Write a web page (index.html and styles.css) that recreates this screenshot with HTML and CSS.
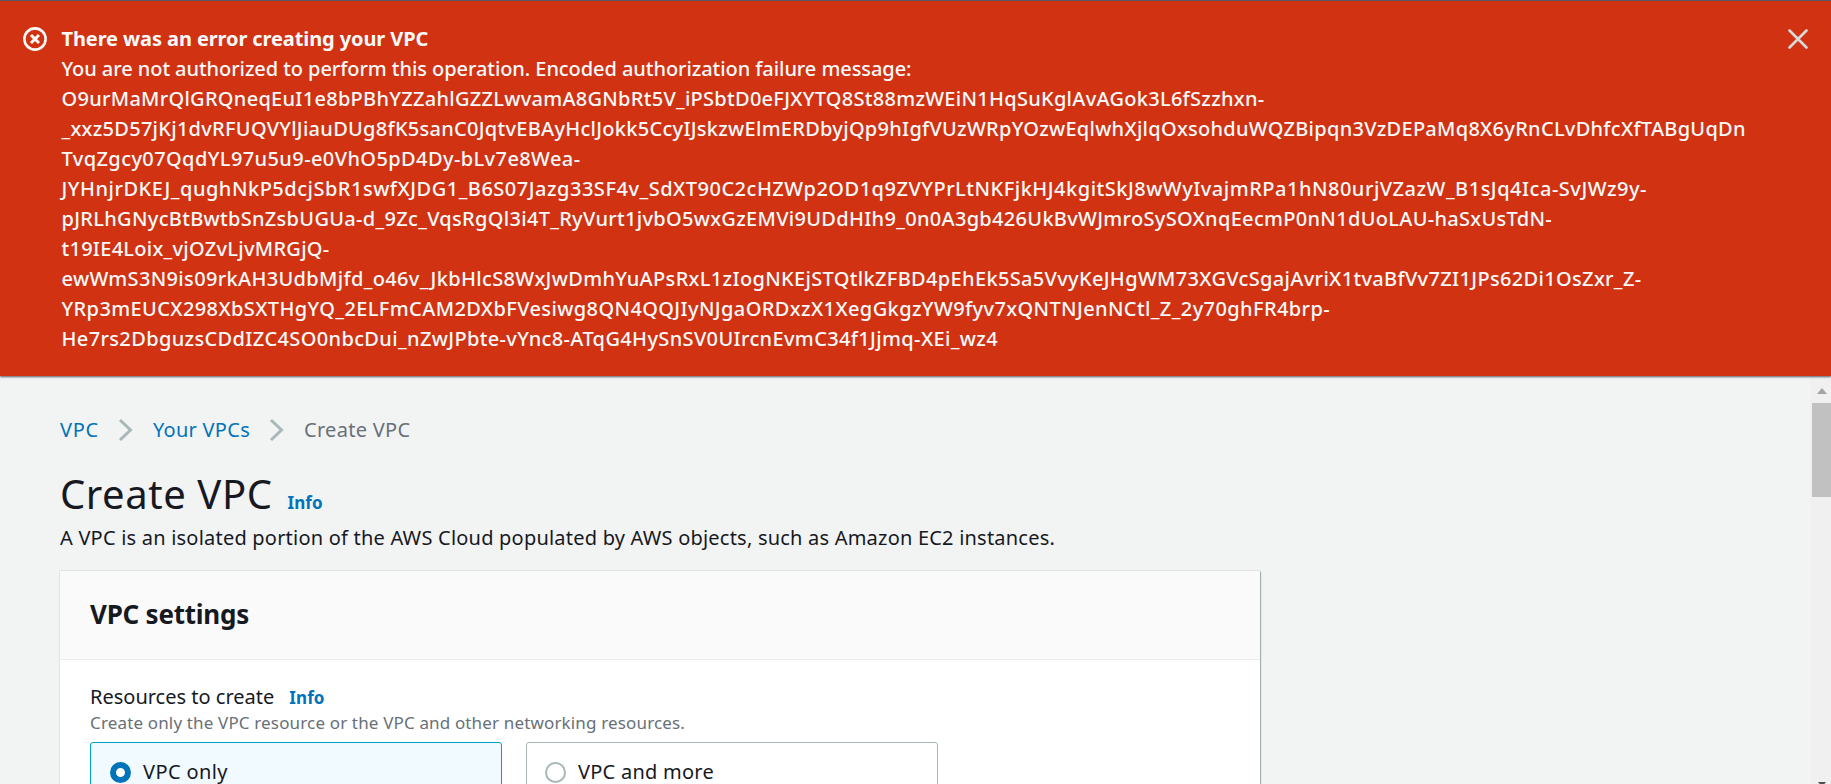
FILE: index.html
```html
<!DOCTYPE html>
<html lang="en">
<head>
<meta charset="utf-8">
<title>Create VPC</title>
<link rel="stylesheet" href="styles.css">
</head>
<body>
<div class="app">
  <section class="flash" role="alert">
    <svg class="flash-icon" viewBox="0 0 24 24" fill="none" stroke="currentColor" stroke-width="2.6"><circle cx="12" cy="12" r="10.6"/><path d="M8 8l8 8M16 8l-8 8" stroke-width="3"/></svg>
    <div class="flash-text">
      <div class="flash-title">There was an error creating your VPC</div>
      <div class="m1">You are not authorized to perform this operation. Encoded authorization failure message:</div>
      <div class="m2">O9urMaMrQlGRQneqEuI1e8bPBhYZZahlGZZLwvamA8GNbRt5V_iPSbtD0eFJXYTQ8St88mzWEiN1HqSuKglAvAGok3L6fSzzhxn-</div>
      <div class="m3">_xxz5D57jKj1dvRFUQVYlJiauDUg8fK5sanC0JqtvEBAyHclJokk5CcyIJskzwElmERDbyjQp9hIgfVUzWRpYOzwEqlwhXjlqOxsohduWQZBipqn3VzDEPaMq8X6yRnCLvDhfcXfTABgUqDn</div>
      <div class="m4">TvqZgcy07QqdYL97u5u9-e0VhO5pD4Dy-bLv7e8Wea-</div>
      <div class="m5">JYHnjrDKEJ_qughNkP5dcjSbR1swfXJDG1_B6S07Jazg33SF4v_SdXT90C2cHZWp2OD1q9ZVYPrLtNKFjkHJ4kgitSkJ8wWyIvajmRPa1hN80urjVZazW_B1sJq4Ica-SvJWz9y-</div>
      <div class="m6">pJRLhGNycBtBwtbSnZsbUGUa-d_9Zc_VqsRgQl3i4T_RyVurt1jvbO5wxGzEMVi9UDdHIh9_0n0A3gb426UkBvWJmroSySOXnqEecmP0nN1dUoLAU-haSxUsTdN-</div>
      <div class="m7">t19IE4Loix_vjOZvLjvMRGjQ-</div>
      <div class="m8">ewWmS3N9is09rkAH3UdbMjfd_o46v_JkbHlcS8WxJwDmhYuAPsRxL1zIogNKEjSTQtlkZFBD4pEhEk5Sa5VvyKeJHgWM73XGVcSgajAvriX1tvaBfVv7ZI1JPs62Di1OsZxr_Z-</div>
      <div class="m9">YRp3mEUCX298XbSXTHgYQ_2ELFmCAM2DXbFVesiwg8QN4QQJIyNJgaORDxzX1XegGkgzYW9fyv7xQNTNJenNCtl_Z_2y70ghFR4brp-</div>
      <div class="m10">He7rs2DbguzsCDdIZC4SO0nbcDui_nZwJPbte-vYnc8-ATqG4HySnSV0UIrcnEvmC34f1Jjmq-XEi_wz4</div>
    </div>
    <svg class="flash-close" viewBox="0 0 20 20" fill="none" stroke="currentColor" stroke-width="2.6" stroke-linecap="round"><path d="M1.5 1.5l17 17M18.5 1.5l-17 17"/></svg>
  </section>
  <div class="body">
    <main class="content">
      <nav class="crumbs">
        <a class="c1">VPC</a>
        <svg class="chev" viewBox="0 0 14 22"><path d="M1 1l10.500 10-10.500 10"/></svg>
        <a class="c2">Your VPCs</a>
        <svg class="chev" viewBox="0 0 14 22"><path d="M1 1l10.500 10-10.500 10"/></svg>
        <span class="c3">Create VPC</span>
      </nav>
      <header class="page-head"><h1>Create VPC</h1><a class="info">Info</a></header>
      <p class="desc">A VPC is an isolated portion of the AWS Cloud populated by AWS objects, such as Amazon EC2 instances.</p>
      <section class="card">
        <div class="card-head"><h2>VPC settings</h2></div>
        <div class="card-body">
          <div class="field"><span class="label">Resources to create</span><a class="info">Info</a></div>
          <div class="hint">Create only the VPC resource or the VPC and other networking resources.</div>
          <div class="tiles">
            <div class="tile selected"><span class="radio"></span><span class="t1">VPC only</span></div>
            <div class="tile"><span class="radio"></span><span class="t2">VPC and more</span></div>
          </div>
        </div>
      </section>
    </main>
    <div class="scrollbar">
      <svg class="up" viewBox="0 0 10 6"><path d="M0 6L5 0l5 6z"/></svg>
      <div class="thumb"></div>
      <svg class="down" viewBox="0 0 8 5"><path d="M0 0h8L4 5z"/></svg>
    </div>
  </div>
</div>
</body>
</html>
```
FILE: styles.css
```css
* { box-sizing: border-box; }
body { margin: 0; overflow: hidden; font: 400 20px/30px "Noto Sans", sans-serif; color: #16191f; background: #f2f3f3; }
svg { display: block; flex: none; }
h1, h2, p { margin: 0; }

.app { height: 784px; display: flex; flex-direction: column; border-top: 1px solid #545b64; overflow: hidden; }

.flash { flex: none; position: relative; z-index: 1; display: flex; align-items: flex-start; height: 375px; padding: 23px 19px 0 23px; background: #d13212; color: #fafafa; box-shadow: 0 1px 2px #545b64; }
.flash-icon { width: 24px; height: 24px; margin-top: 3px; }
.flash-text { flex: 1; margin-left: 14.500px; white-space: nowrap; font-weight: 500; }
.flash-close { width: 20px; height: 20px; margin: 5px 4px 0 0; color: #d5dbdb; }
.flash-title { font-weight: 700; letter-spacing: -.1px; }
.m1 { letter-spacing: -.069px; }
.m2 { letter-spacing: .28px; }
.m3 { letter-spacing: .278px; }
.m4 { letter-spacing: .402px; }
.m5 { letter-spacing: .508px; }
.m6 { letter-spacing: .308px; }
.m7 { letter-spacing: .274px; }
.m8 { letter-spacing: .334px; }
.m9 { letter-spacing: .389px; }
.m10 { letter-spacing: .36px; }

.body { flex: 1; min-height: 0; display: flex; overflow: hidden; }
.content { flex: 1; padding: 39px 0 0 60px; white-space: nowrap; }

.crumbs { display: flex; align-items: center; height: 30px; color: #687078; }
.crumbs a, .info { color: #0073bb; }
.chev { width: 14px; height: 22px; margin: 0 20px; fill: none; stroke: #aab7b8; stroke-width: 3; overflow: visible; }
.c1 { letter-spacing: .750px; }
.c2 { letter-spacing: .271px; }
.c3 { letter-spacing: .3px; }

.page-head { display: flex; align-items: baseline; height: 50px; margin-top: 24px; }
h1 { font-size: 40px; line-height: 50px; font-weight: 400; letter-spacing: .560px; }
.info { font-size: 17px; font-weight: 700; line-height: 24px; letter-spacing: .1px; margin-left: 15px; }
.desc { margin-top: 4px; letter-spacing: .212px; }

.card { width: 1200px; height: 300px; margin-top: 18px; background: #fff; box-shadow: 0 0 1px #879596, 1px 1px 1px #aab7b8; }
.card-head { height: 89px; padding: 25px 30px 0; background: #fafafa; border-bottom: 1px solid #eaeded; }
h2 { font-size: 26px; line-height: 36px; font-weight: 700; letter-spacing: -.234px; }
.card-body { padding: 22px 30px 0; }
.field { display: flex; align-items: baseline; height: 30px; }
.label { letter-spacing: 0; }
.hint { font-size: 17px; line-height: 22px; letter-spacing: .151px; color: #687078; }
.tiles { display: flex; gap: 24px; margin-top: 8px; }
.tile { display: flex; align-items: flex-start; width: 412px; height: 120px; padding: 14px 18px; border: 1px solid #aab7b8; border-radius: 3px; }
.selected { border-color: #00a1c9; background: #f1faff; }
.radio { width: 21px; height: 21px; margin: 5px 12px 0 0; border: 2px solid #aab7b8; border-radius: 50%; background: #fff; }
.selected .radio { margin-left: 1px; border: 6.500px solid #0073bb; }
.t1 { letter-spacing: .400px; }
.t2 { letter-spacing: .250px; }

.scrollbar { flex: none; width: 21px; padding: 12px 0 0 2px; background: #f0f0f0; display: flex; flex-direction: column; overflow: hidden; }
.up { width: 10px; height: 6px; margin-left: 5px; fill: #a3a3a3; }
.thumb { flex: none; height: 94px; margin-top: 9px; background: #c1c1c1; }
.down { width: 8px; height: 5px; margin: 285px 0 0 6px; fill: #505050; }
```
